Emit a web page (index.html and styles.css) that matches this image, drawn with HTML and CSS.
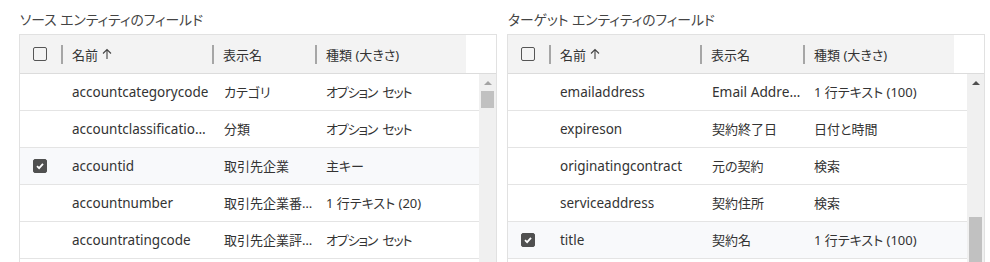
FILE: index.html
```html
<!DOCTYPE html>
<html lang="ja">
<head>
<meta charset="utf-8">
<link rel="stylesheet" href="styles.css">
</head>
<body>
<div class="page">
  <section class="panel">
    <div class="title">ソース エンティティのフィールド</div>
    <div class="grid">
      <div class="head">
        <div class="hc check"><span class="box"></span></div>
        <div class="hc sep">名前 <svg class="arrow" width="10" height="12" viewBox="0 0 10 12"><path d="M5 11V1.5M1 5.5L5 1.5L9 5.5" fill="none" stroke="#444" stroke-width="1.1"/></svg></div>
        <div class="hc sep">表示名</div>
        <div class="hc sep">種類 (大きさ)</div>
        <div class="corner"></div>
      </div>
      <div class="body">
        <div class="rows">
          <div class="row"><div class="c"></div><div class="c n">accountcategorycode</div><div class="c d">カテゴリ</div><div class="c t kana">オプション セット</div></div>
          <div class="row"><div class="c"></div><div class="c n">accountclassificationcode</div><div class="c d">分類</div><div class="c t kana">オプション セット</div></div>
          <div class="row sel"><div class="c"><span class="box on"><svg width="10" height="10" viewBox="0 0 10 10"><path d="M2 5.2L4.1 7.2L8 2.8" fill="none" stroke="#fff" stroke-width="1.8"/></svg></span></div><div class="c n">accountid</div><div class="c d">取引先企業</div><div class="c t">主キー</div></div>
          <div class="row"><div class="c"></div><div class="c n">accountnumber</div><div class="c d">取引先企業番号</div><div class="c t">1 行テキスト (20)</div></div>
          <div class="row"><div class="c"></div><div class="c n">accountratingcode</div><div class="c d">取引先企業評価</div><div class="c t kana">オプション セット</div></div>
        </div>
        <div class="scroll">
          <div class="up light"></div>
          <div class="thumb top"></div>
        </div>
      </div>
    </div>
  </section>
  <section class="panel">
    <div class="title">ターゲット エンティティのフィールド</div>
    <div class="grid">
      <div class="head">
        <div class="hc check"><span class="box"></span></div>
        <div class="hc sep">名前 <svg class="arrow" width="10" height="12" viewBox="0 0 10 12"><path d="M5 11V1.5M1 5.5L5 1.5L9 5.5" fill="none" stroke="#444" stroke-width="1.1"/></svg></div>
        <div class="hc sep">表示名</div>
        <div class="hc sep">種類 (大きさ)</div>
        <div class="corner"></div>
      </div>
      <div class="body">
        <div class="rows">
          <div class="row"><div class="c"></div><div class="c n">emailaddress</div><div class="c d en">Email Address</div><div class="c t">1 行テキスト (100)</div></div>
          <div class="row"><div class="c"></div><div class="c n">expireson</div><div class="c d">契約終了日</div><div class="c t">日付と時間</div></div>
          <div class="row"><div class="c"></div><div class="c n">originatingcontract</div><div class="c d">元の契約</div><div class="c t">検索</div></div>
          <div class="row"><div class="c"></div><div class="c n">serviceaddress</div><div class="c d">契約住所</div><div class="c t">検索</div></div>
          <div class="row sel"><div class="c"><span class="box on"><svg width="10" height="10" viewBox="0 0 10 10"><path d="M2 5.2L4.1 7.2L8 2.8" fill="none" stroke="#fff" stroke-width="1.8"/></svg></span></div><div class="c n">title</div><div class="c d">契約名</div><div class="c t">1 行テキスト (100)</div></div>
        </div>
        <div class="scroll">
          <div class="up"></div>
          <div class="thumb bottom"></div>
        </div>
      </div>
    </div>
  </section>
</div>
</body>
</html>
```
FILE: styles.css
```css
html, body {
  margin: 0;
  padding: 0;
  background: #fff;
}
body {
  font-family: "Noto Sans", "Noto Sans CJK JP", sans-serif;
  font-size: 13px;
  color: #333;
  font-feature-settings: "palt";
  overflow: hidden;
}
.page {
  display: flex;
  gap: 10px;
  padding: 11px 0 0 19px;
}
.panel {
  width: 478px;
  display: flex;
  flex-direction: column;
}
.title {
  height: 23px;
  line-height: 18px;
  padding-left: 1px;
  color: #444;
  font-size: 13.8px;
}
.grid {
  border: 1px solid #e1e1e1;
  border-bottom: none;
  height: 260px;
  display: flex;
  flex-direction: column;
}
.head {
  display: grid;
  grid-template-columns: 41px 151px 103px 151px 1fr;
  height: 38px;
  border-bottom: 1px solid #dcdcdc;
  flex: none;
}
.hc {
  background: #f3f3f3;
  display: flex;
  align-items: center;
  position: relative;
  padding-left: 11px;
  color: #333;
}
.hc.check {
  padding-left: 13px;
}
.hc.sep::before {
  content: "";
  position: absolute;
  left: 0;
  top: 10px;
  width: 2px;
  height: 19px;
  background: #a6a6a6;
}
.arrow {
  margin-left: 4px;
}
.corner {
  background: #fff;
}
.box {
  display: inline-flex;
  align-items: center;
  justify-content: center;
  box-sizing: border-box;
  width: 14px;
  height: 14px;
  border: 1.4px solid #555;
  border-radius: 2px;
}
.box.on {
  background: #505050;
  border-color: #505050;
}
.body {
  display: flex;
  flex: 1;
  min-height: 0;
}
.rows {
  flex: 1;
  min-width: 0;
}
.row {
  display: grid;
  grid-template-columns: 41px 151px 103px 1fr;
  height: 36px;
  border-bottom: 1px solid #e4e4e4;
  align-items: center;
}
.row.sel {
  background: #f8f9fb;
}
.c {
  padding-left: 11px;
  padding-right: 4px;
  white-space: nowrap;
  overflow: hidden;
  text-overflow: ellipsis;
  display: block;
  line-height: 36px;
}
.c.n {
  font-size: 13.5px;
  padding-right: 0;
}
.c.d {
  padding-left: 12px;
  padding-right: 1.5px;
}
.c.en {
  font-size: 13.7px;
}
.kana {
  letter-spacing: -1.2px;
  word-spacing: 3px;
}
.row .c:first-child {
  padding-left: 13px;
  padding-right: 0;
  display: flex;
  align-items: center;
  height: 36px;
}
.scroll {
  width: 17px;
  flex: none;
  background: #f0f0f0;
  display: flex;
  flex-direction: column;
  align-items: center;
  position: relative;
}
.up {
  margin-top: 7px;
  width: 0;
  height: 0;
  border-left: 4px solid transparent;
  border-right: 4px solid transparent;
  border-bottom: 4px solid #505050;
}
.up.light {
  border-bottom-color: #a3a3a3;
}
.thumb {
  width: 13px;
  background: #c1c1c1;
}
.thumb.top {
  margin-top: 6px;
  height: 17px;
}
.thumb.bottom {
  position: absolute;
  left: 2px;
  top: 143px;
  height: 60px;
}
```
